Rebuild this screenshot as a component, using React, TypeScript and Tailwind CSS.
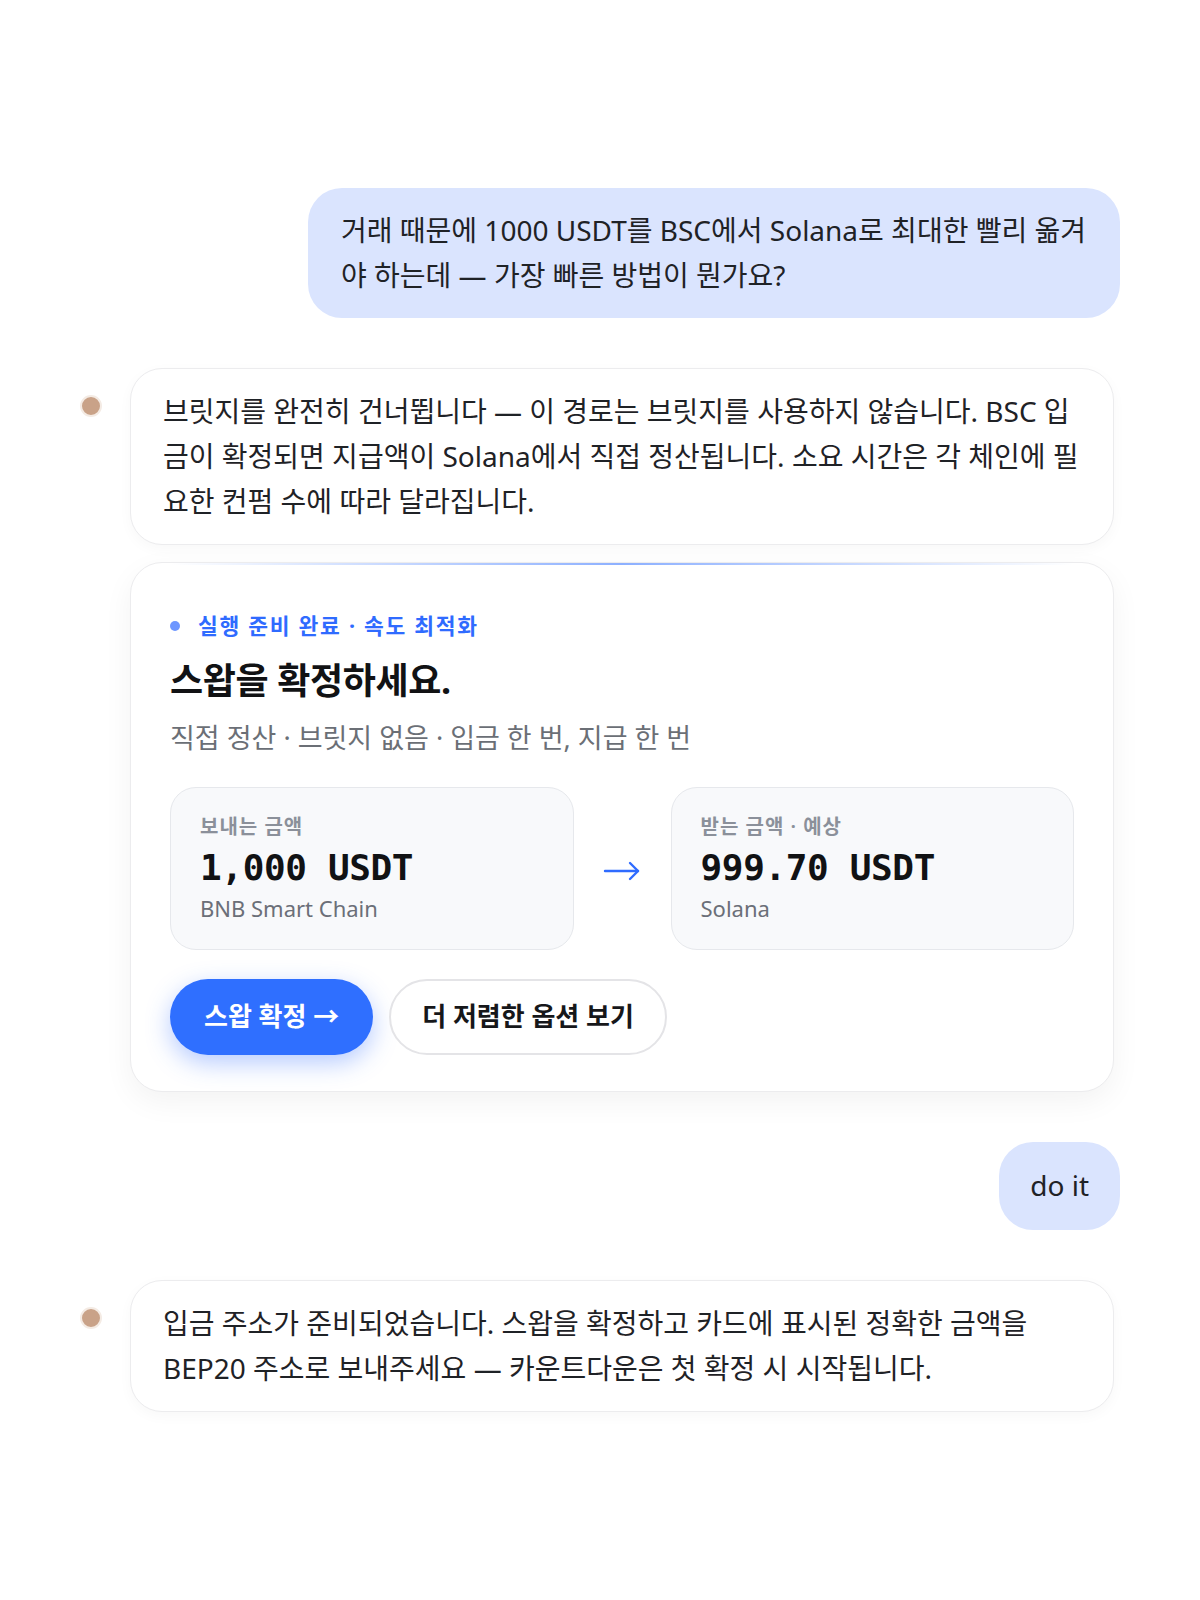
import React from 'react';

const sans = "font-['Noto_Sans','Noto_Sans_CJK_KR',sans-serif]";

const Avatar = () => (
    <div className="mt-[27px] h-[22px] w-[22px] shrink-0 rounded-full border-2 border-[#f4ebe4] bg-[#c9a288]" />
);

const UserBubble: React.FC<{ children: React.ReactNode; compact?: boolean }> = ({ children, compact }) => (
    <div className="flex justify-end">
        <div
            className={`max-w-[812px] rounded-[34px] bg-[#dae4fe] text-[28px] leading-[1.6] text-[#1f2226] ${
                compact ? 'px-[31px] py-[21.5px]' : 'px-[33px] py-[20px]'
            }`}
        >
            {children}
        </div>
    </div>
);

const AssistantBubble: React.FC<{ children: React.ReactNode }> = ({ children }) => (
    <div className="rounded-[32px] border-[1.5px] border-[#ececee] bg-white px-[32px] py-[20.5px] text-[28px] leading-[1.6] text-[#1f2226] shadow-[0_4px_14px_rgba(0,0,0,0.03)]">
        {children}
    </div>
);

const AmountBox: React.FC<{ label: string; amount: string; chain: string }> = ({ label, amount, chain }) => (
    <div className="rounded-[26px] border-[1.5px] border-[#e6e8ec] bg-[#f8f9fb] px-[29px] pt-[26px] pb-[24px]">
        <div className="text-[20px] font-semibold leading-[26px] tracking-[0.05em] text-[#8b909a]">{label}</div>
        <div className="mt-[7px] font-['DejaVu_Sans_Mono',monospace] text-[36px] font-bold leading-[42px] tracking-[-0.01em] text-[#111214]">
            {amount}
        </div>
        <div className="mt-[3px] text-[22px] leading-[33px] text-[#6b6f78]">{chain}</div>
    </div>
);

export default function App() {
    return (
        <div className={`${sans} min-h-[1600px] bg-white px-[80px] pt-[188px]`}>
            <div className="flex flex-col gap-[50px]">
                {/* first question */}
                <UserBubble>
                    거래 때문에 1000 USDT를 BSC에서 Solana로 최대한 빨리 옮겨야 하는데 — 가장 빠른 방법이 뭔가요?
                </UserBubble>

                {/* answer with swap card */}
                <div className="flex gap-[28px] pr-[6px]">
                    <Avatar />
                    <div className="flex flex-1 flex-col gap-[17px]">
                        <AssistantBubble>
                            브릿지를 완전히 건너뜁니다 — 이 경로는 브릿지를 사용하지 않습니다. BSC 입금이 확정되면 지급액이 Solana에서 직접 정산됩니다. 소요 시간은 각 체인에 필요한 컨펌 수에 따라 달라집니다.
                        </AssistantBubble>

                        <div className="relative rounded-[32px] border-[1.5px] border-[#ececee] bg-white px-[39px] pt-[47px] pb-[36px] shadow-[0_10px_30px_rgba(0,0,0,0.05)]">
                            <div className="absolute top-0 right-[40px] left-[40px] h-[2px] bg-gradient-to-r from-transparent via-[#8db0ff] to-transparent" />

                            <div className="flex items-center gap-[18px] text-[21.5px] leading-[32px] font-bold tracking-[0.08em] text-[#2f6bff]">
                                <span className="h-[10px] w-[10px] rounded-full bg-[#6d96ff]" />
                                실행 준비 완료 · 속도 최적화
                            </div>
                            <h2 className="mt-[17px] text-[36px] leading-[44px] font-bold tracking-[-0.01em] text-[#111214]">
                                스왑을 확정하세요.
                            </h2>
                            <p className="mt-[17px] text-[27px] leading-[36px] text-[#6b6f76]">
                                직접 정산 · 브릿지 없음 · 입금 한 번, 지급 한 번
                            </p>

                            <div className="mt-[31px] grid grid-cols-[1fr_97px_1fr] items-center">
                                <AmountBox label="보내는 금액" amount="1,000 USDT" chain="BNB Smart Chain" />
                                <div className="mt-[5px] flex justify-center">
                                    <svg width="38" height="20" viewBox="0 0 38 20" fill="none" stroke="#2f6bff" strokeWidth={2.4} strokeLinecap="round" strokeLinejoin="round">
                                        <path d="M2 10h33" />
                                        <path d="M27 2l8 8-8 8" />
                                    </svg>
                                </div>
                                <AmountBox label="받는 금액 · 예상" amount="999.70 USDT" chain="Solana" />
                            </div>

                            <div className="mt-[29px] flex gap-[16px]">
                                <button className="flex h-[76px] items-center rounded-full bg-[#2f6fff] px-[34px] text-[26px] font-bold text-white shadow-[0_8px_24px_rgba(47,107,255,0.35)]">
                                    스왑 확정 →
                                </button>
                                <button className="flex h-[76px] items-center rounded-full border-2 border-[#e4e4e7] bg-white px-[31px] text-[26px] font-bold text-[#16171a]">
                                    더 저렴한 옵션 보기
                                </button>
                            </div>
                        </div>
                    </div>
                </div>

                <UserBubble compact>do it</UserBubble>

                <div className="flex gap-[28px] pr-[6px]">
                    <Avatar />
                    <div className="flex-1">
                        <AssistantBubble>
                            입금 주소가 준비되었습니다. 스왑을 확정하고 카드에 표시된 정확한 금액을 BEP20 주소로 보내주세요 — 카운트다운은 첫 확정 시 시작됩니다.
                        </AssistantBubble>
                    </div>
                </div>
            </div>
        </div>
    );
}
